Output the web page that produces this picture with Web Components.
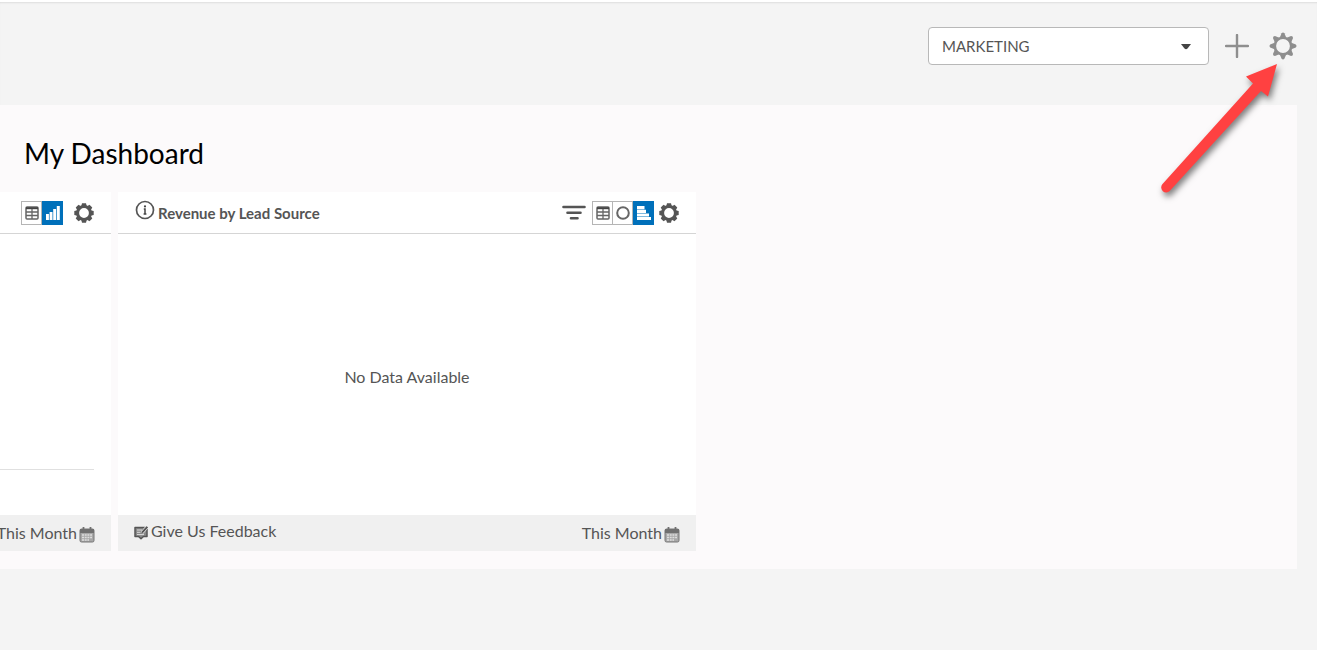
<!DOCTYPE html>
<html lang="en">
<head>
<meta charset="utf-8">
<title>My Dashboard</title>
<style>
  body { margin: 0; min-height: 100vh; background: #f4f4f4; font: 16px/20px Lato, "Liberation Sans", sans-serif; color: #555; }
</style>
</head>
<body>
<dashboard-app></dashboard-app>
<script>
const tooth = (d, n = 8) => Array.from({ length: n }, (_, i) => `<path d="${d}" transform="rotate(${i * 360 / n})"/>`).join('');
const grid = `<rect x="1" y="1" width="12" height="12" rx="1" fill="none" stroke="#666" stroke-width="1.5"/><path d="M1 2.2h12" stroke="#444" stroke-width="2"/><path d="M1 6h12M1 9.5h12M7 3v10" stroke="#666" stroke-width="1.3"/>`;
const icons = {
  gear: [20, 20, `<g transform="translate(10 10)" fill="#555">${tooth('M-2.8-6.5L-2-9.7H2L2.8-6.5Z')}<circle r="6.4" fill="none" stroke="#555" stroke-width="3"/></g>`],
  sun: [28, 28, `<g transform="translate(14 14)" fill="#8e8e8e">${tooth('M-3.2-8.4L-1.4-12.8Q0-14.2 1.4-12.8L3.2-8.4Z')}<circle r="8.2" fill="none" stroke="#8e8e8e" stroke-width="2.6"/></g>`],
  plus: [24, 24, '<path d="M12 1v22M1 12h22" stroke="#8e8e8e" stroke-width="2.4" stroke-linecap="round"/>'],
  info: [20, 20, '<circle cx="10" cy="10" r="8.5" fill="none" stroke="#555" stroke-width="1.7"/><circle cx="10" cy="6.4" r="1.1" fill="#444"/><path d="M8.8 9H10v5M8.6 14h2.8" fill="none" stroke="#444" stroke-width="1.5"/>'],
  filter: [24, 16, '<path d="M1.500 2h21M5.500 7.700h13M9 13.300h6.500" stroke="#555" stroke-width="2.600" stroke-linecap="round"/>'],
  table: [14, 14, grid],
  ring: [14, 14, '<circle cx="7" cy="7" r="5.8" fill="none" stroke="#666" stroke-width="2"/>'],
  columns: [14, 14, '<path d="M0 8h2.900v6H0zM3.600 6h2.900v8H3.600zM7.200 3h2.900v11H7.200zM10.800 0h3v14h-3z" fill="#fff"/>'],
  bars: [14, 14, '<path d="M0 0h7.500v3.200H0zM0 3.700h9v3.200H0zM0 7.400h12v3H0zM0 10.900h14V14H0z" fill="#fff"/>'],
  calendar: [16, 16, '<rect x="1" y="2" width="14" height="13" rx="1.5" fill="#a8a8a8" stroke="#777"/><path d="M1 2h14v4H1z" fill="#707070"/><path d="M4.500 0v3M11.500 0v3" stroke="#707070" stroke-width="1.800"/><path d="M3 8h10M3 10.500h10M3 13h7" stroke="#dedede" stroke-width="1.600" stroke-dasharray="2 .7"/>'],
  feedback: [14, 14, '<path d="M1 1.500h12v9H9.500L7 12.800 4.500 10.500H1z" fill="#888" stroke="#555" stroke-width="1.500" stroke-linejoin="round"/><path d="M3 4h5M3 6.300h3.500M3 8.600h7" stroke="#ddd"/><path d="M8 6.700L13 1" stroke="#f0f0f0" stroke-width="3.200"/><path d="M8 6.700L13.300.8" stroke="#555" stroke-width="2"/>']
};
const define = (name, html, setup) => customElements.define(name, class extends HTMLElement {
  constructor() {
    super();
    const t = document.createElement('template');
    t.innerHTML = html;
    this.attachShadow({ mode: 'open' }).append(t.content.cloneNode(true));
  }
  connectedCallback() { if (setup) setup(this); }
});

define('ui-icon', '<style>:host{display:block;flex:none}svg{display:block}</style><div></div>', el => {
  const [w, h, body] = icons[el.getAttribute('name')];
  el.shadowRoot.querySelector('div').innerHTML = `<svg width="${w}" height="${h}" viewBox="0 0 ${w} ${h}" aria-hidden="true">${body}</svg>`;
});

define('icon-button', `<style>
  :host{display:block;flex:none}
  button{display:block;padding:0;border:0;background:none;cursor:pointer}
</style><button type="button"><slot></slot></button>`, el => {
  el.shadowRoot.querySelector('button').setAttribute('aria-label', el.getAttribute('label'));
});

define('view-option', `<style>
  :host{display:block;flex:none}
  button{box-sizing:border-box;display:flex;align-items:center;justify-content:center;width:21px;height:24px;padding:0;border:1px solid #b5b5b5;background:#fff;cursor:pointer}
  :host([active]) button{background:#0070ba;border-color:#0070ba}
</style><button type="button"><slot></slot></button>`, el => {
  const b = el.shadowRoot.querySelector('button');
  b.setAttribute('aria-label', el.getAttribute('label'));
  b.setAttribute('aria-pressed', el.hasAttribute('active'));
});

define('dashboard-picker', `<style>
  :host{display:block;position:relative;width:281px}
  select{appearance:none;box-sizing:border-box;display:block;width:100%;height:38px;padding:0 13px;border:1px solid #b8b8b8;border-radius:4px;background:#fff;color:#555;font:inherit;font-size:15px}
  svg{position:absolute;right:18px;top:17px;pointer-events:none}
</style>
<select aria-label="Dashboard"><option>MARKETING</option></select>
<svg width="10" height="6" aria-hidden="true"><path d="M0 0h10L6.500 4.500Q5 6 3.500 4.500z" fill="#444"/></svg>`);

define('top-bar', `<style>
  :host{display:flex;justify-content:flex-end;align-items:center;gap:16px;box-sizing:border-box;height:105px;padding:0 20px 16px;border-top:2px solid #fff;box-shadow:inset 0 2px 2px -1px #ddd}
  .gear{margin-left:4px}
</style>
<dashboard-picker></dashboard-picker>
<icon-button label="Add dashboard"><ui-icon name="plus"></ui-icon></icon-button>
<icon-button class="gear" label="Dashboard settings"><ui-icon name="sun"></ui-icon></icon-button>`);

define('dash-card', `<style>
  :host{display:flex;flex-direction:column;overflow:hidden;background:#fff}
  header{display:flex;align-items:center;justify-content:flex-end;box-sizing:border-box;height:42px;padding:0 17px;border-bottom:1px solid #d5d5d5}
  main{display:flex;flex-direction:column;align-items:center;justify-content:center;min-height:281px}
  footer{display:flex;align-items:center;justify-content:flex-end;height:36px;padding:0 16px;background:#f0f0f0}
  .range{display:flex;align-items:center;gap:2px;flex:none;padding:0;border:0;background:none;color:inherit;font:inherit;white-space:nowrap;cursor:pointer}
  ui-icon{padding-top:3px}
</style>
<header><slot name="title"></slot><slot name="tools"></slot></header>
<main><slot></slot></main>
<footer><slot name="feedback"></slot><button class="range" type="button">This Month<ui-icon name="calendar"></ui-icon></button></footer>`);

define('dashboard-panel', `<style>
  :host{display:block;margin-right:20px;padding-bottom:18px;background:#fcfafb}
  h1{margin:0;padding:30px 24px 21px;font-size:28px;line-height:36px;font-weight:400;color:#000}
  .cards{display:flex;gap:7px}
  .side{width:111px}
  .main{width:578px}
  h2{display:flex;align-items:center;gap:3px;margin:0 auto 0 0;font-size:15px;line-height:20px;font-weight:700}
  h2 ui-icon{padding-bottom:5px}
  .tools{display:flex;align-items:center}
  .views{display:flex}
  .views view-option+view-option:not([active]){margin-left:-1px}
  .side .views{margin-right:11px}
  .main .views{margin:0 5px 0 6px}
  .axis{align-self:stretch;margin:190px 17px 0 0;border-top:1px solid #e0e0e0}
  p{margin:4px 0 0}
  a{display:flex;align-items:center;gap:3px;margin-right:auto;padding-bottom:4px;color:inherit;text-decoration:none}
  a ui-icon{padding-top:4px}
</style>
<h1>My Dashboard</h1>
<div class="cards">
  <dash-card class="side">
    <div class="tools" slot="tools">
      <div class="views"><view-option label="Table"><ui-icon name="table"></ui-icon></view-option><view-option active label="Column chart"><ui-icon name="columns"></ui-icon></view-option></div>
      <icon-button label="Card settings"><ui-icon name="gear"></ui-icon></icon-button>
    </div>
    <div class="axis"></div>
  </dash-card>
  <dash-card class="main">
    <h2 slot="title"><ui-icon name="info"></ui-icon>Revenue by Lead Source</h2>
    <div class="tools" slot="tools">
      <icon-button label="Filter"><ui-icon name="filter"></ui-icon></icon-button>
      <div class="views"><view-option label="Table"><ui-icon name="table"></ui-icon></view-option><view-option label="Ring chart"><ui-icon name="ring"></ui-icon></view-option><view-option active label="Bar chart"><ui-icon name="bars"></ui-icon></view-option></div>
      <icon-button label="Card settings"><ui-icon name="gear"></ui-icon></icon-button>
    </div>
    <p>No Data Available</p>
    <a slot="feedback" href="#feedback"><ui-icon name="feedback"></ui-icon>Give Us Feedback</a>
  </dash-card>
</div>`);

define('pointer-arrow', `<style>
  :host{display:block;position:absolute;top:55px;right:17px;pointer-events:none}
  svg{display:block;filter:drop-shadow(2px 4px 3px rgba(0,0,0,.5))}
</style>
<svg width="150" height="155" viewBox="0 0 150 155" aria-hidden="true"><path d="M127 9L96 21.500L103 28.500L12.300 129.300A5 5 0 0 0 19.700 136L111 36L118 41.500Z" fill="#ff4141"/></svg>`);

define('dashboard-app', `<style>:host{display:block;position:relative}</style>
<top-bar></top-bar><dashboard-panel></dashboard-panel><pointer-arrow></pointer-arrow>`);
</script>
</body>
</html>
